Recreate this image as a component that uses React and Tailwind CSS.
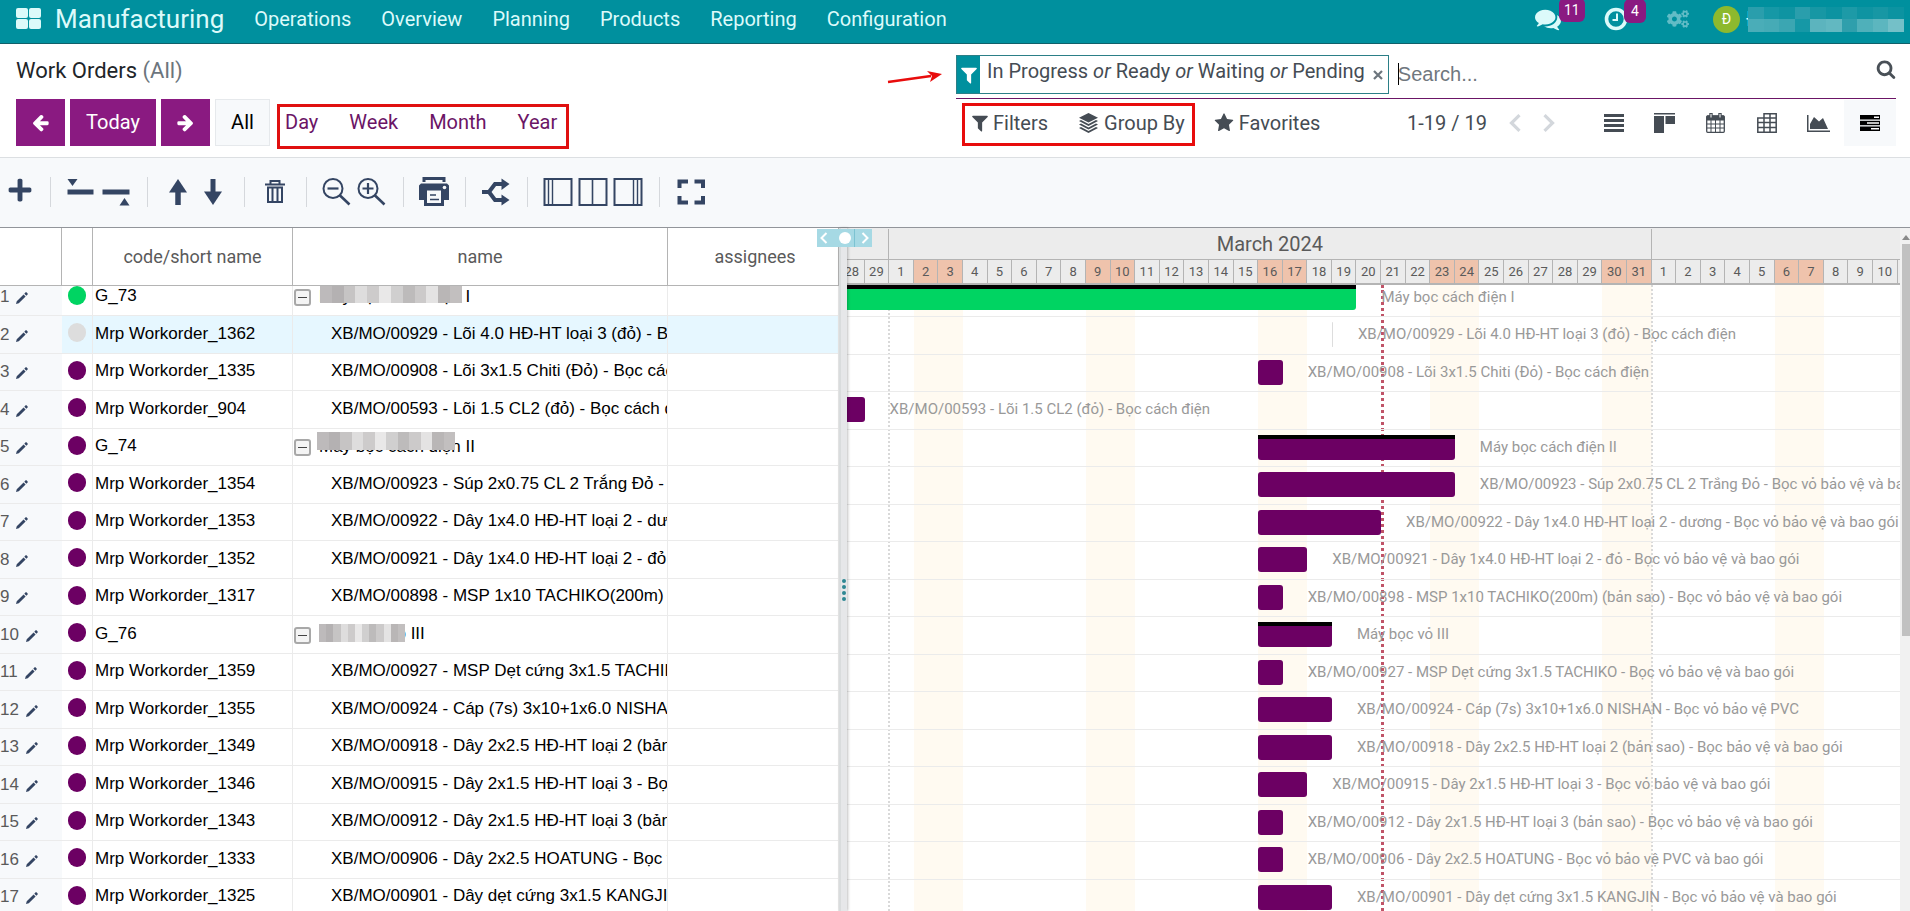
import { FaCogs, FaPlus } from 'react-icons/fa';

const MENU = ['Operations', 'Overview', 'Planning', 'Products', 'Reporting', 'Configuration'];

// start and end are day offsets on the timeline, 0 is 28 February
const ROWS = [
  { code: 'G_73', name: 'Máy bọc cách điện I', group: true, color: 'green', start: 0, end: 21, mask: 'w-[142px] top-px left-[1px]' },
  { code: 'Mrp Workorder_1362', name: 'XB/MO/00929 - Lõi 4.0 HĐ-HT loại 3 (đỏ) - Bọc cách điện', color: 'gray', start: 20, end: 20, active: true },
  { code: 'Mrp Workorder_1335', name: 'XB/MO/00908 - Lõi 3x1.5 Chiti (Đỏ) - Bọc cách điện', color: 'purple', start: 17, end: 18 },
  { code: 'Mrp Workorder_904', name: 'XB/MO/00593 - Lõi 1.5 CL2 (đỏ) - Bọc cách điện', color: 'purple', start: 0, end: 1 },
  { code: 'G_74', name: 'Máy bọc cách điện II', group: true, color: 'purple', start: 17, end: 25, mask: 'w-[138px] -top-[2px] -left-[2px]' },
  { code: 'Mrp Workorder_1354', name: 'XB/MO/00923 - Súp 2x0.75 CL 2 Trắng Đỏ - Bọc vỏ bảo vệ và bao gói', color: 'purple', start: 17, end: 25 },
  { code: 'Mrp Workorder_1353', name: 'XB/MO/00922 - Dây 1x4.0 HĐ-HT loại 2 - dương - Bọc vỏ bảo vệ và bao gói', color: 'purple', start: 17, end: 22 },
  { code: 'Mrp Workorder_1352', name: 'XB/MO/00921 - Dây 1x4.0 HĐ-HT loại 2 - đỏ - Bọc vỏ bảo vệ và bao gói', color: 'purple', start: 17, end: 19 },
  { code: 'Mrp Workorder_1317', name: 'XB/MO/00898 - MSP 1x10 TACHIKO(200m) (bản sao) - Bọc vỏ bảo vệ và bao gói', color: 'purple', start: 17, end: 18 },
  { code: 'G_76', name: 'Máy bọc vỏ III', group: true, color: 'purple', start: 17, end: 20, mask: 'w-[86px] top-[3px] left-0' },
  { code: 'Mrp Workorder_1359', name: 'XB/MO/00927 - MSP Dẹt cứng 3x1.5 TACHIKO - Bọc vỏ bảo vệ và bao gói', color: 'purple', start: 17, end: 18 },
  { code: 'Mrp Workorder_1355', name: 'XB/MO/00924 - Cáp (7s) 3x10+1x6.0 NISHAN - Bọc vỏ bảo vệ PVC', color: 'purple', start: 17, end: 20 },
  { code: 'Mrp Workorder_1349', name: 'XB/MO/00918 - Dây 2x2.5 HĐ-HT loại 2 (bản sao) - Bọc bảo vệ và bao gói', color: 'purple', start: 17, end: 20 },
  { code: 'Mrp Workorder_1346', name: 'XB/MO/00915 - Dây 2x1.5 HĐ-HT loại 3 - Bọc vỏ bảo vệ và bao gói', color: 'purple', start: 17, end: 19 },
  { code: 'Mrp Workorder_1343', name: 'XB/MO/00912 - Dây 2x1.5 HĐ-HT loại 3 (bản sao) - Bọc vỏ bảo vệ và bao gói', color: 'purple', start: 17, end: 18 },
  { code: 'Mrp Workorder_1333', name: 'XB/MO/00906 - Dây 2x2.5 HOATUNG - Bọc vỏ bảo vệ PVC và bao gói', color: 'purple', start: 17, end: 18 },
  { code: 'Mrp Workorder_1325', name: 'XB/MO/00901 - Dây dẹt cứng 3x1.5 KANGJIN - Bọc vỏ bảo vệ và bao gói', color: 'purple', start: 17, end: 20 },
];

const COLORS = { green: 'bg-[#00d462]', gray: 'bg-[#dddddd]', purple: 'bg-[#6c0063]' };

const FEB = [28, 29];
const MARCH = Array.from({ length: 31 }, (_, i) => i + 1);
const APRIL = Array.from({ length: 10 }, (_, i) => i + 1);
const DAYS = [...FEB, ...MARCH, ...APRIL];
const WEEKENDS = [3, 10, 17, 24, 31, 38];
const VISIBLE_DAYS = 43.1;
const TODAY = 22;

const pct = (days) => `${(days / VISIBLE_DAYS) * 100}%`;
const isWeekend = (i) => WEEKENDS.some((w) => i === w || i === w + 1);

const FILTER_PATH =
  'M1595 295q17 41-14 70l-493 493v742q0 42-39 59-13 5-25 5-27 0-45-19l-256-256q-19-19-19-45v-486l-493-493q-31-29-14-70 17-39 59-39h1280q42 0 59 39z';
const STAR_PATH =
  'M1728 647q0 22-26 48l-363 354 86 500q1 7 1 20 0 21-10.5 35.5t-30.5 14.5q-19 0-40-12l-449-236-449 236q-22 12-40 12-21 0-31.5-14.5t-10.5-35.5q0-6 2-20l86-500-364-354q-25-27-25-48 0-37 56-46l502-73 225-455q19-41 49-41t49 41l225 455 502 73q56 9 56 46z';
const SEARCH_PATH =
  'M1216 832q0-185-131.5-316.5t-316.5-131.5-316.5 131.5-131.5 316.5 131.5 316.5 316.5 131.5 316.5-131.5 131.5-316.5zm512 832q0 52-38 90t-90 38q-54 0-90-38l-343-342q-179 124-399 124-143 0-273.5-55.5t-225-150-150-225-55.5-273.5 55.5-273.5 150-225 225-150 273.5-55.5 273.5 55.5 225 150 150 225 55.5 273.5q0 220-124 399l343 343q37 37 37 90z';
const LEFT_PATH =
  'M1664 896v128q0 53-32.5 90.5t-84.5 37.5h-704l293 294q38 36 38 90t-38 90l-75 76q-37 37-90 37-52 0-91-37l-651-652q-37-37-37-90 0-52 37-91l651-650q38-38 91-38 52 0 90 38l75 74q38 38 38 91t-38 91l-293 293h704q52 0 84.5 37.5t32.5 90.5z';
const RIGHT_PATH =
  'M1600 960q0 54-37 91l-651 651q-39 37-91 37-51 0-90-37l-75-75q-38-38-38-91t38-91l293-293h-704q-52 0-84.5-37.5t-32.5-90.5v-128q0-53 32.5-90.5t84.5-37.5h704l-293-294q-38-36-38-90t38-90l75-75q38-38 90-38 53 0 91 38l651 651q37 35 37 90z';
const COMMENTS_PATH =
  'M1408 768q0 139-94 257t-256.5 186.5-353.5 68.5q-86 0-176-16-124 88-278 128-36 9-86 16h-3q-11 0-20.5-8t-11.5-21q-1-3-1-6.5t.5-6.5 2-6l2.5-5 3.5-5.5 4-5 4.5-5 4-4.5q5-6 23-25t26-29.5 22.5-29 25-38.5 20.5-44q-124-72-195-177t-71-224q0-139 94-257t256.5-186.5 353.5-68.5 353.5 68.5 256.5 186.5 94 257zm384 256q0 120-71 224.5t-195 176.5q10 24 20.5 44t25 38.5 22.5 29 26 29.5 23 25q1 1 4 4.5t4.5 5 4 5 3.5 5.5l2.5 5 2 6 .5 6.5-1 6.5q-3 14-13 22t-22 7q-50-7-86-16-154-40-278-128-90 16-176 16-271 0-472-132 58 4 88 4 161 0 309-45t264-129q125-92 192-212t67-254q0-77-23-152 129 71 204 178t75 230z';

function Glyph({ d, className }) {
  return (
    <svg viewBox="0 0 1792 1792" fill="currentColor" className={className} aria-hidden="true">
      <path d={d} />
    </svg>
  );
}

function Navbar() {
  return (
    <nav className="flex h-11 shrink-0 items-start border-b border-[#10606a] bg-[#00909e] pl-4 text-[20px] text-[#dcfafa]">
      <button aria-label="Apps" className="mt-2 shrink-0">
        <svg viewBox="0 0 25 21" className="h-[21px] w-[25px]" fill="currentColor">
          <rect x="0" y="0" width="12" height="10" rx="2" />
          <rect x="13" y="0" width="12" height="10" rx="2" />
          <rect x="0" y="11" width="12" height="10" rx="2" />
          <rect x="13" y="11" width="12" height="10" rx="2" />
        </svg>
      </button>
      <a href="#" className="ml-[14px] text-[26px] leading-[38px]">Manufacturing</a>
      <div className="ml-[30px] flex gap-[30px] leading-[38px]">
        {MENU.map((item) => (
          <a key={item} href="#">{item}</a>
        ))}
      </div>
      <div className="ml-auto flex h-[38px] items-center">
        <button aria-label="Messages" className="relative mr-[43px]">
          <Glyph d={COMMENTS_PATH} className="size-[26px]" />
          <span className="absolute -top-[8px] left-6 rounded-md bg-[#8a1a81] px-[5px] text-[14px] leading-[24px] text-white">11</span>
        </button>
        <button aria-label="Activities" className="relative mr-[39px]">
          <svg viewBox="0 0 24 24" className="size-6" fill="none" stroke="currentColor">
            <circle cx="12" cy="12" r="9.5" strokeWidth="3.6" />
            <path d="M13 6.5V13H8.5" strokeWidth="2" />
          </svg>
          <span className="absolute -top-2 left-5 rounded-md bg-[#8a1a81] px-[7px] text-[14px] leading-[24px] text-white">4</span>
        </button>
        <button aria-label="Settings" className="mr-6 text-[#62bcc6]">
          <FaCogs className="size-[22px]" />
        </button>
        <button className="flex items-center">
          <span className="size-[27px] rounded-full bg-[#8db92e] text-center text-[14px] leading-[27px] text-white">Đ</span>
          <span className="relative ml-[6px] w-[164px] text-left leading-[27px]">
            Đ
            {/* blurred user name */}
            <span className="absolute inset-y-[1px] left-[2px] grid w-[156px] grid-cols-10">
              <i className="bg-[#2a9eac]" /><i className="bg-[#1698a6]" /><i className="bg-[#0f94a2]" /><i className="bg-[#2a9eac]" /><i className="bg-[#1797a4]" />
              <i className="bg-[#0c93a1]" /><i className="bg-[#1d9aa7]" /><i className="bg-[#0f94a2]" /><i className="bg-[#1797a4]" /><i className="bg-[#0c93a1]" />
              <i className="bg-[#4aadb8]" /><i className="bg-[#46abb6]" /><i className="bg-[#3ba6b2]" /><i className="bg-[#1698a6]" /><i className="bg-[#5cb4be]" />
              <i className="bg-[#62b8c1]" /><i className="bg-[#2f9fac]" /><i className="bg-[#4fb0ba]" /><i className="bg-[#5cb6bf]" /><i className="bg-[#74c0c8]" />
            </span>
          </span>
        </button>
      </div>
    </nav>
  );
}

function ScaleButtons() {
  return (
    <div className="flex text-[20px]">
      <button aria-label="Previous" className="mr-[5px] flex h-[47px] w-[49px] items-center justify-center bg-[#8a1a81] text-white">
        <Glyph d={LEFT_PATH} className="size-[19px]" />
      </button>
      <button className="mr-[5px] h-[47px] w-[86px] bg-[#8a1a81] pb-[2px] text-white">Today</button>
      <button aria-label="Next" className="mr-[5px] flex h-[47px] w-[49px] items-center justify-center bg-[#8a1a81] text-white">
        <Glyph d={RIGHT_PATH} className="size-[19px]" />
      </button>
      <button className="h-[47px] w-[55px] border border-[#e6e9ec] bg-[#f7f9fb] pb-[2px] text-black">All</button>
      <div className="relative flex gap-[31px] pr-3 pb-[2px] pl-[15px] text-[#6b1566]">
        {['Day', 'Week', 'Month', 'Year'].map((scale) => (
          <button key={scale}>{scale}</button>
        ))}
        <div className="pointer-events-none absolute top-[5px] right-0 -bottom-[3px] left-[7px] border-[3px] border-[#e01010]" />
      </div>
    </div>
  );
}

function SearchBar() {
  return (
    <div className="relative flex h-[44px] items-start border-b border-[#6b1566]">
      <svg viewBox="0 0 56 16" className="absolute top-[15px] -left-[69px] h-4 w-14" aria-hidden="true">
        <path d="M1 12L44 6" stroke="#e80c0c" strokeWidth="2.6" fill="none" />
        <path d="M40 1L55 4L43 12L45 6Z" fill="#e80c0c" />
      </svg>
      <div className="flex h-[39px] border border-[#2b7f87] text-[20px] text-[#454c54]">
        <span className="flex w-[23px] items-center justify-center bg-[#00909e] text-white">
          <Glyph d={FILTER_PATH} className="size-5" />
        </span>
        <span className="pl-[7px] leading-[31px]">
          In Progress <i>or</i> Ready <i>or</i> Waiting <i>or</i> Pending
        </span>
        <button aria-label="Remove filter" className="mr-1 ml-2 w-[11px]">
          <svg viewBox="0 0 10 10" className="size-[10px]" stroke="#6c757d" strokeWidth="2.2">
            <path d="M1 1L9 9M9 1L1 9" />
          </svg>
        </button>
      </div>
      <input
        aria-label="Search"
        placeholder="Search..."
        className="ml-[9px] h-[39px] min-w-0 flex-1 font-['Liberation_Sans',sans-serif] text-[20px] outline-none placeholder:text-[#70777e]"
      />
      <span className="absolute top-2 left-[442px] h-[22px] w-px bg-black" />
      <button aria-label="Run search" className="mt-[4px] text-[#495057]">
        <Glyph d={SEARCH_PATH} className="size-5" />
      </button>
    </div>
  );
}

function ViewIcons() {
  return (
    <div className="flex items-center text-[#454c54]">
      <button aria-label="List" className="flex w-[51px] justify-center">
        <svg viewBox="0 0 20 18" className="h-[18px] w-5" fill="currentColor">
          <path d="M0 0h20v3H0zM0 5h20v3H0zM0 10h20v3H0zM0 15h20v3H0z" />
        </svg>
      </button>
      <button aria-label="Kanban" className="flex w-[51px] justify-center">
        <svg viewBox="0 0 21 20" className="h-5 w-[21px]" fill="currentColor">
          <path d="M0 0h21v1.5H0zM0 3h10v17H0zM11.500 3h9.500v8h-9.500z" />
        </svg>
      </button>
      <button aria-label="Calendar" className="flex w-[51px] justify-center">
        <svg viewBox="0 0 19 20" className="h-5 w-[19px]" fill="none" stroke="currentColor">
          <path d="M1 3h17v4H1z" fill="currentColor" />
          <rect x=".7" y="3" width="17.600" height="16.300" rx="1" strokeWidth="1.300" />
          <path d="M5 7v12M9.500 7v12M14 7v12M1 11h17M1 15h17" strokeWidth="1" />
          <path d="M5 0v5M14 0v5" strokeWidth="3.400" />
          <path d="M5 1v3.500M14 1v3.500" stroke="#fff" strokeWidth="1" />
        </svg>
      </button>
      <button aria-label="Pivot" className="flex w-[51px] justify-center">
        <svg viewBox="0 0 20 20" className="size-5" fill="none" stroke="currentColor" strokeWidth="1.500">
          <path d="M7 5V.8h12.200v18.400H.8V5H19M.8 9.500H19M.8 14.500H19M7 5v14M13 .8V19" />
        </svg>
      </button>
      <button aria-label="Graph" className="flex w-[52px] justify-center">
        <svg viewBox="0 0 23 20" className="h-5 w-[23px]" fill="currentColor">
          <path d="M0 2h1.500v15.500H23V19H0z" />
          <path d="M3 16V11l4-7 5 4.500L16 5l5 11z" />
        </svg>
      </button>
      <button aria-label="Gantt" className="flex h-[46px] w-[52px] items-center justify-center bg-[#f7f9fb] text-black">
        <svg viewBox="0 0 20 16" className="h-4 w-5" fill="currentColor">
          <path d="M0 0h20v4.500H0z" />
          <path d="M0 5.800h20v4.400H0z" />
          <path d="M0 11.500h20V16H0z" />
          <path d="M14 1.500h5v1.500h-5zM7 7.300h12v1.500H7zM11 13h8v1.500h-8z" fill="#fff" />
        </svg>
      </button>
    </div>
  );
}

function ControlPanel() {
  return (
    <header className="grid shrink-0 grid-cols-2 border-b border-[#dcdfe2] bg-white pr-[14px] pl-4">
      <div className="pb-[11px]">
        <h1 className="h-[55px] pt-[11px] text-[22px] leading-[32px] text-[#212529]">
          Work Orders <span className="text-[#6c757d]">(All)</span>
        </h1>
        <ScaleButtons />
      </div>
      <div className="pt-[11px]">
        <SearchBar />
        <div className="mt-px flex h-[46px] items-center text-[20px] text-[#454c54]">
          <div className="relative flex">
            <button className="flex items-center gap-[3px] pl-[14px]">
              <Glyph d={FILTER_PATH} className="size-5" />
              Filters
            </button>
            <button className="ml-[31px] flex items-center gap-[6px] pr-[10px]">
              <svg viewBox="0 0 19 20" className="h-5 w-[19px]" fill="currentColor">
                <path d="M9.500 0L19 4.800L9.500 9.600L0 4.800Z" />
                <path d="M0 8l2-1 7.500 3.900L17 7l2 1-9.500 4.900zM0 11.500l2-1 7.500 3.900 7.500-3.900 2 1-9.500 4.900zM0 15l2-1 7.500 3.900L17 14l2 1-9.500 4.900z" />
              </svg>
              Group By
            </button>
            <div className="pointer-events-none absolute -top-[5px] right-0 -bottom-[8px] left-[6px] border-[3px] border-[#e80c0c]" />
          </div>
          <button className="ml-[19px] flex items-center gap-[5px]">
            <Glyph d={STAR_PATH} className="size-5" />
            Favorites
          </button>
          <span className="ml-auto">1-19 / 19</span>
          <div className="mr-[32px] ml-[21px] flex gap-[20px] text-[#d3d7dc]">
            <button aria-label="Previous page">
              <svg viewBox="0 0 14 18" className="h-[18px] w-[14px]" fill="none" stroke="currentColor" strokeWidth="3.200">
                <path d="M11.500 1.200L3.500 9l8 7.800" />
              </svg>
            </button>
            <button aria-label="Next page">
              <svg viewBox="0 0 14 18" className="h-[18px] w-[14px]" fill="none" stroke="currentColor" strokeWidth="3.200">
                <path d="M2.500 1.200L10.500 9l-8 7.800" />
              </svg>
            </button>
          </div>
          <ViewIcons />
        </div>
      </div>
    </header>
  );
}

function Tool({ label, children }) {
  return (
    <button aria-label={label} className="flex h-[30px] w-[35px] items-center justify-center">
      <svg viewBox="0 0 32 30" className="h-[30px] w-8 shrink-0" fill="none" stroke="currentColor">
        {children}
      </svg>
    </button>
  );
}

function ToolGroup({ children }) {
  return <div className="flex border-l border-[#d5d8dc] pr-[14px] pl-3">{children}</div>;
}

function Toolbar() {
  return (
    <div className="flex h-[70px] shrink-0 items-start border-b border-[#92959a] bg-[#f7f9fb] pt-[19px] text-[#344563]">
      <button aria-label="Add" className="mr-[17px] ml-[7px]">
        <FaPlus className="size-[26px]" />
      </button>
      <ToolGroup>
        <Tool label="Collapse all">
          <path d="M2.500 2h10l-5 7z" fill="currentColor" stroke="none" />
          <path d="M2.500 15h26" strokeWidth="5" />
        </Tool>
        <Tool label="Expand all">
          <path d="M2.500 15h27" strokeWidth="5" />
          <path d="M19.500 28.500h10l-5-7.500z" fill="currentColor" stroke="none" />
        </Tool>
      </ToolGroup>
      <ToolGroup>
        <Tool label="Move up">
          <path d="M16 28V13" strokeWidth="5.500" />
          <path d="M7 15.500h18L16 2z" fill="currentColor" stroke="none" />
        </Tool>
        <Tool label="Move down">
          <path d="M16 2v15" strokeWidth="5" />
          <path d="M7 14.500h18L16 28z" fill="currentColor" stroke="none" />
        </Tool>
      </ToolGroup>
      <ToolGroup>
        <Tool label="Delete">
          <path d="M6 7.500h20M11.500 7V4h9v3" strokeWidth="2" />
          <path d="M9 10.500h14V25H9zM13.500 10v15M18.500 10v15" strokeWidth="2" />
        </Tool>
      </ToolGroup>
      <ToolGroup>
        <Tool label="Zoom out">
          <circle cx="12" cy="11.500" r="9.500" strokeWidth="2" />
          <path d="M6.500 11.500h11" strokeWidth="2.200" />
          <path d="M18.500 18l10 9.500" strokeWidth="2.600" />
        </Tool>
        <Tool label="Zoom in">
          <circle cx="12" cy="11.500" r="9.500" strokeWidth="2" />
          <path d="M6.500 11.500h11M12 6v11" strokeWidth="2.200" />
          <path d="M18.500 18l10 9.500" strokeWidth="2.600" />
        </Tool>
      </ToolGroup>
      <ToolGroup>
        <Tool label="Print">
          <path d="M6 5V1.500h20V5" strokeWidth="3" />
          <path d="M3 6.500h26l2 2V23h-5v6H6v-6H1V8.500z" fill="currentColor" stroke="none" />
          <path d="M9 13.500h14V26H9z" fill="#f7f9fb" stroke="none" />
          <circle cx="26.500" cy="10.500" r="1.800" fill="#f7f9fb" stroke="none" />
          <path d="M12 18h6M12 22.500h9" strokeWidth="1.500" />
        </Tool>
      </ToolGroup>
      <ToolGroup>
        <Tool label="Split">
          <path d="M2 15h7l6-8h8M9 15l6 8h8" strokeWidth="4" />
          <path d="M21.500 1.500L29.500 7l-8 6zM21.500 17.500l8 5.500-8 5.500z" fill="currentColor" stroke="none" />
        </Tool>
      </ToolGroup>
      <ToolGroup>
        <Tool label="Left panel">
          <path d="M2.500 2h27v26h-27z" strokeWidth="2" />
          <path d="M6.500 2v26M10.500 2v26" strokeWidth="1.400" />
        </Tool>
        <Tool label="Both panels">
          <path d="M2.500 2h27v26h-27z" strokeWidth="2" />
          <path d="M15.500 2v26" strokeWidth="1.600" />
        </Tool>
        <Tool label="Right panel">
          <path d="M2.500 2h27v26h-27z" strokeWidth="2" />
          <path d="M21.500 2v26M25.500 2v26" strokeWidth="1.400" />
        </Tool>
      </ToolGroup>
      <ToolGroup>
        <Tool label="Full screen">
          <path d="M5.500 11V4.500H14M20.500 4.500H29V11M29 19v6.500h-8.500M14 25.500H5.500V19" strokeWidth="4" />
        </Tool>
      </ToolGroup>
    </div>
  );
}

function Columns() {
  return (
    <colgroup>
      <col className="w-[62px]" />
      <col className="w-[31px]" />
      <col className="w-[200px]" />
      <col className="w-[375px]" />
      <col className="w-[171px]" />
    </colgroup>
  );
}

function Mosaic({ className }) {
  return (
    <span className={`absolute flex h-[18px] *:flex-1 ${className}`}>
      <i className="bg-[#bdbabb]" /><i className="bg-[#b4b1b2]" /><i className="bg-[#c6c4c4]" /><i className="bg-[#dedddd]" />
      <i className="bg-[#cdcbcb]" /><i className="bg-[#e9e8e8]" /><i className="bg-[#d0cfcf]" /><i className="bg-[#bdbbbb]" />
      <i className="bg-[#cccaca]" /><i className="bg-[#e4e3e3]" /><i className="bg-[#b9b6b6]" /><i className="bg-[#c2bfbf]" />
    </span>
  );
}

function TaskTable() {
  return (
    <div className="flex w-[839px] shrink-0 flex-col overflow-hidden">
      <table className="w-full table-fixed border-separate border-spacing-0">
        <Columns />
        <thead>
          <tr className="h-[58px] text-[18px] text-[#5a5a5a] [&>th]:border-r [&>th]:border-b [&>th]:border-[#b4b4b4] [&>th]:font-normal">
            <th aria-label="Number" />
            <th aria-label="Status" />
            <th>code/short name</th>
            <th>name</th>
            <th className="pl-1">assignees</th>
          </tr>
        </thead>
      </table>
      <div className="min-h-0 flex-1 overflow-hidden">
        <table className="-mt-[7px] w-full table-fixed border-separate border-spacing-0 font-['Liberation_Sans',sans-serif] text-[17px] leading-[26px] text-black">
          <Columns />
          <tbody>
            {ROWS.map((row, i) => (
              <tr
                key={row.code}
                className={`h-[38px] odd:h-[37px] [&>td]:border-b [&>td]:border-[#ebebeb] [&>td]:p-0 [&>td+td]:border-r ${row.active ? 'bg-[#e6f7ff]' : ''}`}
              >
                <td className="bg-[#f7f9fb] text-[#5a5a5a]">
                  <div className="flex items-center gap-[7px]">
                    {i + 1}
                    <svg viewBox="0 0 13 13" className="mt-[2px] size-3" fill="#344563" aria-hidden="true">
                      <path d="M0 13l.8-3L8.200 2.600l2.200 2.200L3 12.200zM9 1.800L10.400.4q.5-.4 1 0l1.200 1.200q.4.500 0 1L11.200 4z" />
                    </svg>
                  </div>
                </td>
                <td>
                  <div className={`mx-auto mb-1 h-[19px] w-[18px] rounded-full ${COLORS[row.color]}`} />
                </td>
                <td>
                  <div className="overflow-hidden pb-[2px] pl-[2px] whitespace-nowrap">{row.code}</div>
                </td>
                <td>
                  {row.group ? (
                    <div className="flex items-center pb-px pl-[1px]">
                      <button aria-label="Collapse" className="mt-[2px] flex size-[17px] items-center justify-center rounded-[3px] border-2 border-[#a8a8a8] bg-[#f4f4f4]">
                        <span className="h-px w-[9px] bg-[#444]" />
                      </button>
                      <span className="relative ml-2 whitespace-nowrap">
                        {row.name}
                        <Mosaic className={row.mask} />
                      </span>
                    </div>
                  ) : (
                    <div className="overflow-hidden pb-[2px] pl-[38px] whitespace-nowrap">{row.name}</div>
                  )}
                </td>
                <td />
              </tr>
            ))}
          </tbody>
        </table>
      </div>
    </div>
  );
}

function Splitter() {
  return (
    <div className="relative z-10 flex w-2 shrink-0 items-center border-l-2 border-[#d9dcdd] bg-[#e6e7e9] shadow-[1px_0_3px_rgba(0,0,0,0.25)]">
      <div className="absolute top-px -left-[24px] flex h-[18px] w-[55px] items-center justify-between bg-[#a6d9e4] px-[3px]">
        <svg viewBox="0 0 8 12" className="h-3 w-2" fill="none" stroke="#fff" strokeWidth="2">
          <path d="M6.500 1L1.500 6l5 5" />
        </svg>
        <span className="size-3 rounded-full bg-white" />
        <span className="absolute top-0 right-[17px] h-full w-px bg-[#7cc3d2]" />
        <svg viewBox="0 0 8 12" className="h-3 w-2" fill="none" stroke="#fff" strokeWidth="2">
          <path d="M1.500 1l5 5-5 5" />
        </svg>
      </div>
      <div className="flex w-full flex-col items-center gap-[2px] pt-10">
        {[0, 1, 2, 3].map((dot) => (
          <span key={dot} className="size-1 rounded-full bg-[#2f8793]" />
        ))}
      </div>
    </div>
  );
}

function Timeline() {
  return (
    <div className="min-w-0 flex-1 overflow-hidden">
      <div className="-ml-[7px] flex h-full flex-col">
        <div className="shrink-0 bg-[#ececec] text-[#5a5a5a]">
          <div className="flex h-8 border-b border-[#b4b4b4] pt-px text-center text-[20px] leading-[30px]">
            <div className="border-r border-[#b4b4b4]" style={{ width: pct(2) }} />
            <div className="border-r border-[#b4b4b4]" style={{ width: pct(31) }}>March 2024</div>
          </div>
          <div className="flex h-[25px] overflow-hidden border-b-2 border-[#b4b4b4] text-center text-[13px] leading-[23px]">
            {DAYS.map((day, i) => (
              <div
                key={i}
                className={`shrink-0 border-r border-[#b4b4b4] ${isWeekend(i) ? 'bg-[#efc3ac]' : ''}`}
                style={{ width: pct(1) }}
              >
                {day}
              </div>
            ))}
          </div>
        </div>
        <div className="relative min-h-0 flex-1 overflow-hidden text-[15px] leading-[25px] text-[#999]">
          {WEEKENDS.map((w) => (
            <div key={w} className="absolute inset-y-0 bg-[#fffaf1]" style={{ left: pct(w), width: pct(2) }} />
          ))}
          {[2, 33].map((m) => (
            <div key={m} className="absolute inset-y-0 -ml-px border-l-2 border-dotted border-[#d9d9d9]" style={{ left: pct(m) }} />
          ))}
          <div className="absolute inset-y-0 border-l-3 border-dotted border-[#c05468]" style={{ left: pct(TODAY) }} />
          <div className="relative -mt-[5px]">
            {ROWS.map((row) => (
              <div key={row.code} className="flex h-[38px] border-b border-[#ebebeb] pt-[5px] odd:h-[37px]">
                <div
                  className={`h-[25px] min-w-px shrink-0 rounded-[3px] ${row.group ? 'rounded-t-none border-t-4 border-black' : ''} ${COLORS[row.color]}`}
                  style={{ marginLeft: pct(row.start), width: pct(row.end - row.start) }}
                />
                <span className="ml-[25px] whitespace-nowrap">{row.name}</span>
              </div>
            ))}
          </div>
        </div>
      </div>
    </div>
  );
}

function Scrollbar() {
  return (
    <div className="flex w-[10px] shrink-0 flex-col items-end bg-[#f1f1f1] pt-[7px]">
      <svg viewBox="0 0 8 5" className="h-[5px] w-2" fill="#8a8a8a">
        <path d="M4 0l4 5H0z" />
      </svg>
      <div className="mt-1 h-[58%] w-2 bg-[#c1c1c1]" />
    </div>
  );
}

export default function App() {
  return (
    <div className="flex h-screen flex-col overflow-hidden bg-white font-[Roboto,sans-serif]">
      <Navbar />
      <ControlPanel />
      <Toolbar />
      <main className="flex min-h-0 flex-1">
        <TaskTable />
        <Splitter />
        <Timeline />
        <Scrollbar />
      </main>
    </div>
  );
}
